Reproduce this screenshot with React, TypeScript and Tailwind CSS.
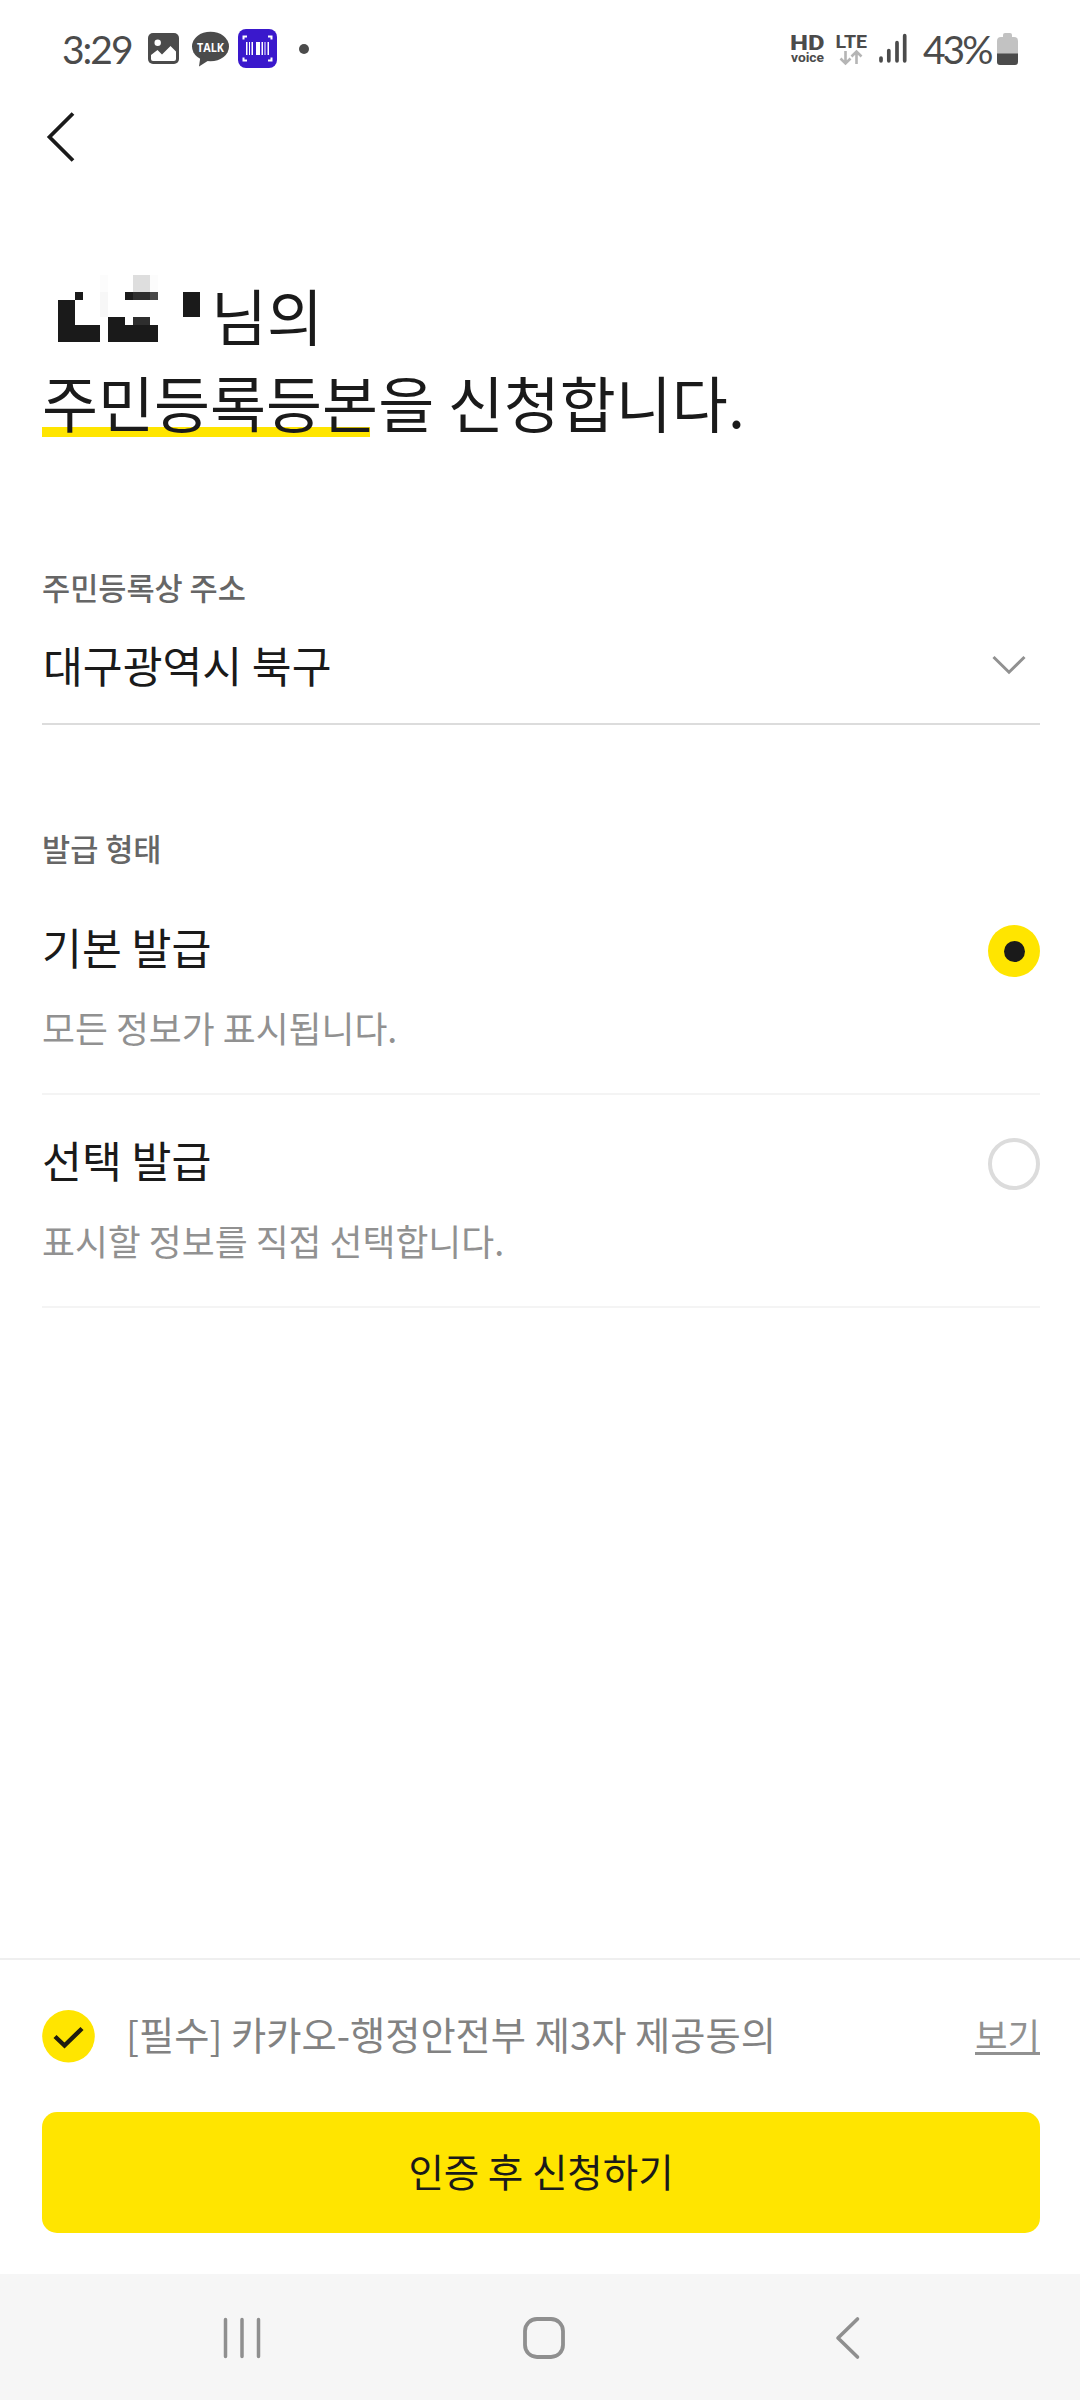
import { useState } from "react";

const issueTypes = [
  { id: "basic", title: "기본 발급", desc: "모든 정보가 표시됩니다." },
  { id: "custom", title: "선택 발급", desc: "표시할 정보를 직접 선택합니다." },
];

export default function App() {
  const [issueType, setIssueType] = useState("basic");

  return (
    <div className="flex h-[2400px] w-[1080px] flex-col overflow-hidden bg-white font-['Noto_Sans_CJK_KR',sans-serif] text-[#1a1a1a]">
      <StatusBar />

      <header className="flex h-[80px] items-center pl-[46px]">
        <button aria-label="뒤로">
          <svg width="30" height="52" viewBox="0 0 30 52" fill="none" stroke="#1a1a1a" strokeWidth="3.8">
            <path d="M27 2.5 3.5 26 27 49.5" />
          </svg>
        </button>
      </header>

      <main className="flex-1 pt-[94px] pr-10 pl-[42px]">
        <h1 className="text-[60.9px] leading-[87px]">
          <span className="flex h-[87px]">
            <MaskedName />
            님의
          </span>
          <span className="block whitespace-nowrap">
            <span className="bg-[linear-gradient(#ffe500,#ffe500)] bg-[length:328px_10px] bg-[position:0_70px] bg-no-repeat">
              주민등록등본
            </span>
            을 신청합니다.
          </span>
        </h1>

        <section className="mt-[119px]">
          <h2 className="text-[30.6px] leading-[46px] font-medium text-[#666]">주민등록상 주소</h2>
          <button className="flex h-[115px] w-full items-center justify-between border-b-2 border-[#dcdcdc] pr-[13px] pb-[5px] pl-px text-[43.3px]">
            <span className="leading-[60px]">대구광역시 북구</span>
            <svg className="mt-[2px]" width="36" height="20" viewBox="0 0 36 20" fill="none" stroke="#919191" strokeWidth="3">
              <path d="M2.5 2 18 17.2 33.5 2" />
            </svg>
          </button>
        </section>

        <section className="mt-[100px]">
          <h2 className="text-[30.6px] leading-[46px] font-medium text-[#666]">발급 형태</h2>
          <div className="mt-[11px]">
            {issueTypes.map((type) => (
              <button
                key={type.id}
                onClick={() => setIssueType(type.id)}
                className="block h-[213px] w-full border-b-2 border-[#f4f4f4] pt-[34px] pb-[41px] text-left"
              >
                <span className="flex h-[60px] items-center justify-between">
                  <span className="text-[43.4px] leading-[60px]">{type.title}</span>
                  <Radio checked={issueType === type.id} />
                </span>
                <span className="mt-[26px] block text-[35.8px] leading-[50px] text-[#919191]">{type.desc}</span>
              </button>
            ))}
          </div>
        </section>
      </main>

      <footer className="h-[316px] border-t-2 border-[#efefef] pt-[50px] pr-10 pl-[42px]">
        <div className="flex h-[52px] items-center">
          <svg width="53" height="53" viewBox="0 0 53 53">
            <circle cx="26.5" cy="26.3" r="26.3" fill="#ffe500" />
            <path d="M13 26.5 22.5 35.5 40 18.5" fill="none" stroke="#1f1c10" strokeWidth="4.4" />
          </svg>
          <span className="mb-[5px] ml-[31px] text-[38.3px] leading-[52px] text-[#828282]">
            [필수] 카카오-행정안전부 제3자 제공동의
          </span>
          <a className="relative mb-[4px] ml-auto text-[35.4px] leading-[52px] text-[#919191] after:absolute after:inset-x-0 after:top-[44px] after:h-[3px] after:bg-[#919191]">
            보기
          </a>
        </div>
        <button className="mt-[50px] flex h-[121px] w-full items-center justify-center rounded-[15px] bg-[#ffe500] pb-[3px] text-[38.5px]">
          인증 후 신청하기
        </button>
      </footer>

      <NavBar />
    </div>
  );
}

function Radio({ checked }: { checked: boolean }) {
  if (!checked) {
    return <span className="mt-[10px] size-[52px] rounded-full border-4 border-[#dcdcdc]" />;
  }
  return (
    <span className="mt-[10px] flex size-[52px] items-center justify-center rounded-full bg-[#ffe500]">
      <span className="size-[21px] rounded-full bg-[#1a1a1a]" />
    </span>
  );
}

// Privacy mosaic over the applicant's name
function MaskedName() {
  return (
    <svg className="mt-[4px] mr-[5px] shrink-0" width="164" height="68" viewBox="36 45 492 204" shapeRendering="crispEdges">
      <g fill="#1a1a1a">
        <path d="M84 120h51v75h75v51H84z" />
        <path d="M135 96h24v24h-24z" />
        <path d="M234 171h51v24h99v51H234z" />
        <path d="M285 96h24v24h-24z" />
        <path d="M459 96h51v75h-51z" />
      </g>
      <path fill="#2e2e2e" d="M309 96h51v24h-51zM309 171h51v24h-51z" />
      <path fill="#484848" d="M360 96h24v24h-24z" />
      <path fill="#dedede" d="M309 45h51v51h-51z" />
      <path fill="#fcfcfc" d="M210 45h24v51h-24zM360 45h24v51h-24z" />
      <path fill="#f7f7f7" d="M210 96h24v75h-24z" />
    </svg>
  );
}

function StatusBar() {
  return (
    <div className="flex h-[97px] items-center justify-between pr-[62px] pl-[62px] text-[#4b4b4b]">
      <div className="flex items-center">
        <span className="w-[86px] font-[Lato,sans-serif] text-[39px] leading-[40px] tracking-[-2px] whitespace-nowrap">3:29</span>

        <svg width="31" height="31" viewBox="0 0 31 31">
          <rect width="31" height="31" rx="5" fill="#4b4b4b" />
          <circle cx="9.7" cy="9.7" r="3.2" fill="#fff" />
          <path d="M3 22 9.5 17 14 21.5 22.5 13 28 18.5V26q0 2-2 2H5q-2 0-2-2z" fill="#fff" />
        </svg>

        <svg className="ml-[13px]" width="37" height="36" viewBox="0 0 37 36">
          <ellipse cx="18.5" cy="15.5" rx="18.5" ry="14.8" fill="#4b4b4b" />
          <path d="M8.5 25 7 35.5 18 28.5z" fill="#4b4b4b" />
          <text x="18.5" y="20.5" textAnchor="middle" textLength="27" lengthAdjust="spacingAndGlyphs" fill="#fff" fontFamily="Open Sans" fontWeight="700" fontSize="13">
            TALK
          </text>
        </svg>

        <svg className="ml-[9px]" width="39" height="39" viewBox="0 0 39 39">
          <rect width="39" height="39" rx="8" fill="#3a18cc" />
          <path d="M5.5 10.500V7.500h3.500M30 7.500h3.500v3M33.500 28.500v3H30M9 31.500H5.500v-3" fill="none" stroke="#fff" strokeWidth="2" />
          <path d="M8 13h1.500v13H8zM11 13h1v13h-1zM13.500 13h1.500v13h-1.500zM18 13h4v13h-4zM23.500 13h1.500v13h-1.500zM26.500 13h1v13h-1zM29.500 13h1.500v13h-1.500z" fill="#fff" />
        </svg>

        <span className="ml-[22px] size-[10px] rounded-full bg-[#4b4b4b]" />
      </div>

      <div className="flex items-center">
        <svg className="overflow-visible" width="116" height="34" viewBox="0 0 116 34" fill="#4b4b4b" fontFamily="Roboto, sans-serif" fontWeight="700">
          <text x="-1" y="18" fontSize="21" fontWeight="800" textLength="34.5" lengthAdjust="spacingAndGlyphs">HD</text>
          <text x="0" y="30" fontSize="13.5" textLength="33" lengthAdjust="spacingAndGlyphs">voice</text>
          <text x="44.5" y="15.5" fontSize="19" textLength="31.5" lengthAdjust="spacingAndGlyphs">LTE</text>
          <path d="M54.500 19v12M49.500 26.500l5 5 5-5M65.500 32V20M60.500 24.500l5-5 5 5" fill="none" stroke="#b5b5b5" strokeWidth="2.6" />
          <path d="M90 26v2.800M97.800 18.500v10.300M106 10.700v18.100M113.700 3.700v25.100" fill="none" stroke="#4b4b4b" strokeWidth="3.7" strokeLinecap="round" />
        </svg>

        <span className="ml-[16px] w-[74px] font-[Lato,sans-serif] text-[39px] leading-[40px] tracking-[-3px] whitespace-nowrap">43%</span>

        <svg width="21" height="32" viewBox="0 0 21 32">
          <path d="M6 2q0-2 2-2h5q2 0 2 2v2h2q4 0 4 4v13H0V8q0-4 4-4h2z" fill="#c2c2c2" />
          <path d="M0 20.500h21V29q0 3-3 3H3q-3 0-3-3z" fill="#4b4b4b" />
        </svg>
      </div>
    </div>
  );
}

function NavBar() {
  return (
    <nav className="flex h-[126px] items-center justify-between bg-[#f6f6f6] pt-[1px] pr-[219px] pl-[223px]">
      <svg width="38" height="42" viewBox="0 0 38 42" fill="none" stroke="#8f8f8f" strokeWidth="3.5" strokeLinecap="round">
        <path d="M2.500 2.500v37M19 2.500v37M35.500 2.500v37" />
      </svg>
      <svg className="mr-[8px]" width="42" height="42" viewBox="0 0 42 42" fill="none" stroke="#8f8f8f" strokeWidth="3.8">
        <rect x="2" y="2" width="38" height="38" rx="12" />
      </svg>
      <svg width="26" height="44" viewBox="0 0 26 44" fill="none" stroke="#8f8f8f" strokeWidth="3.6" strokeLinecap="round" strokeLinejoin="round">
        <path d="M22.500 3 3 22l19.500 19" />
      </svg>
    </nav>
  );
}
